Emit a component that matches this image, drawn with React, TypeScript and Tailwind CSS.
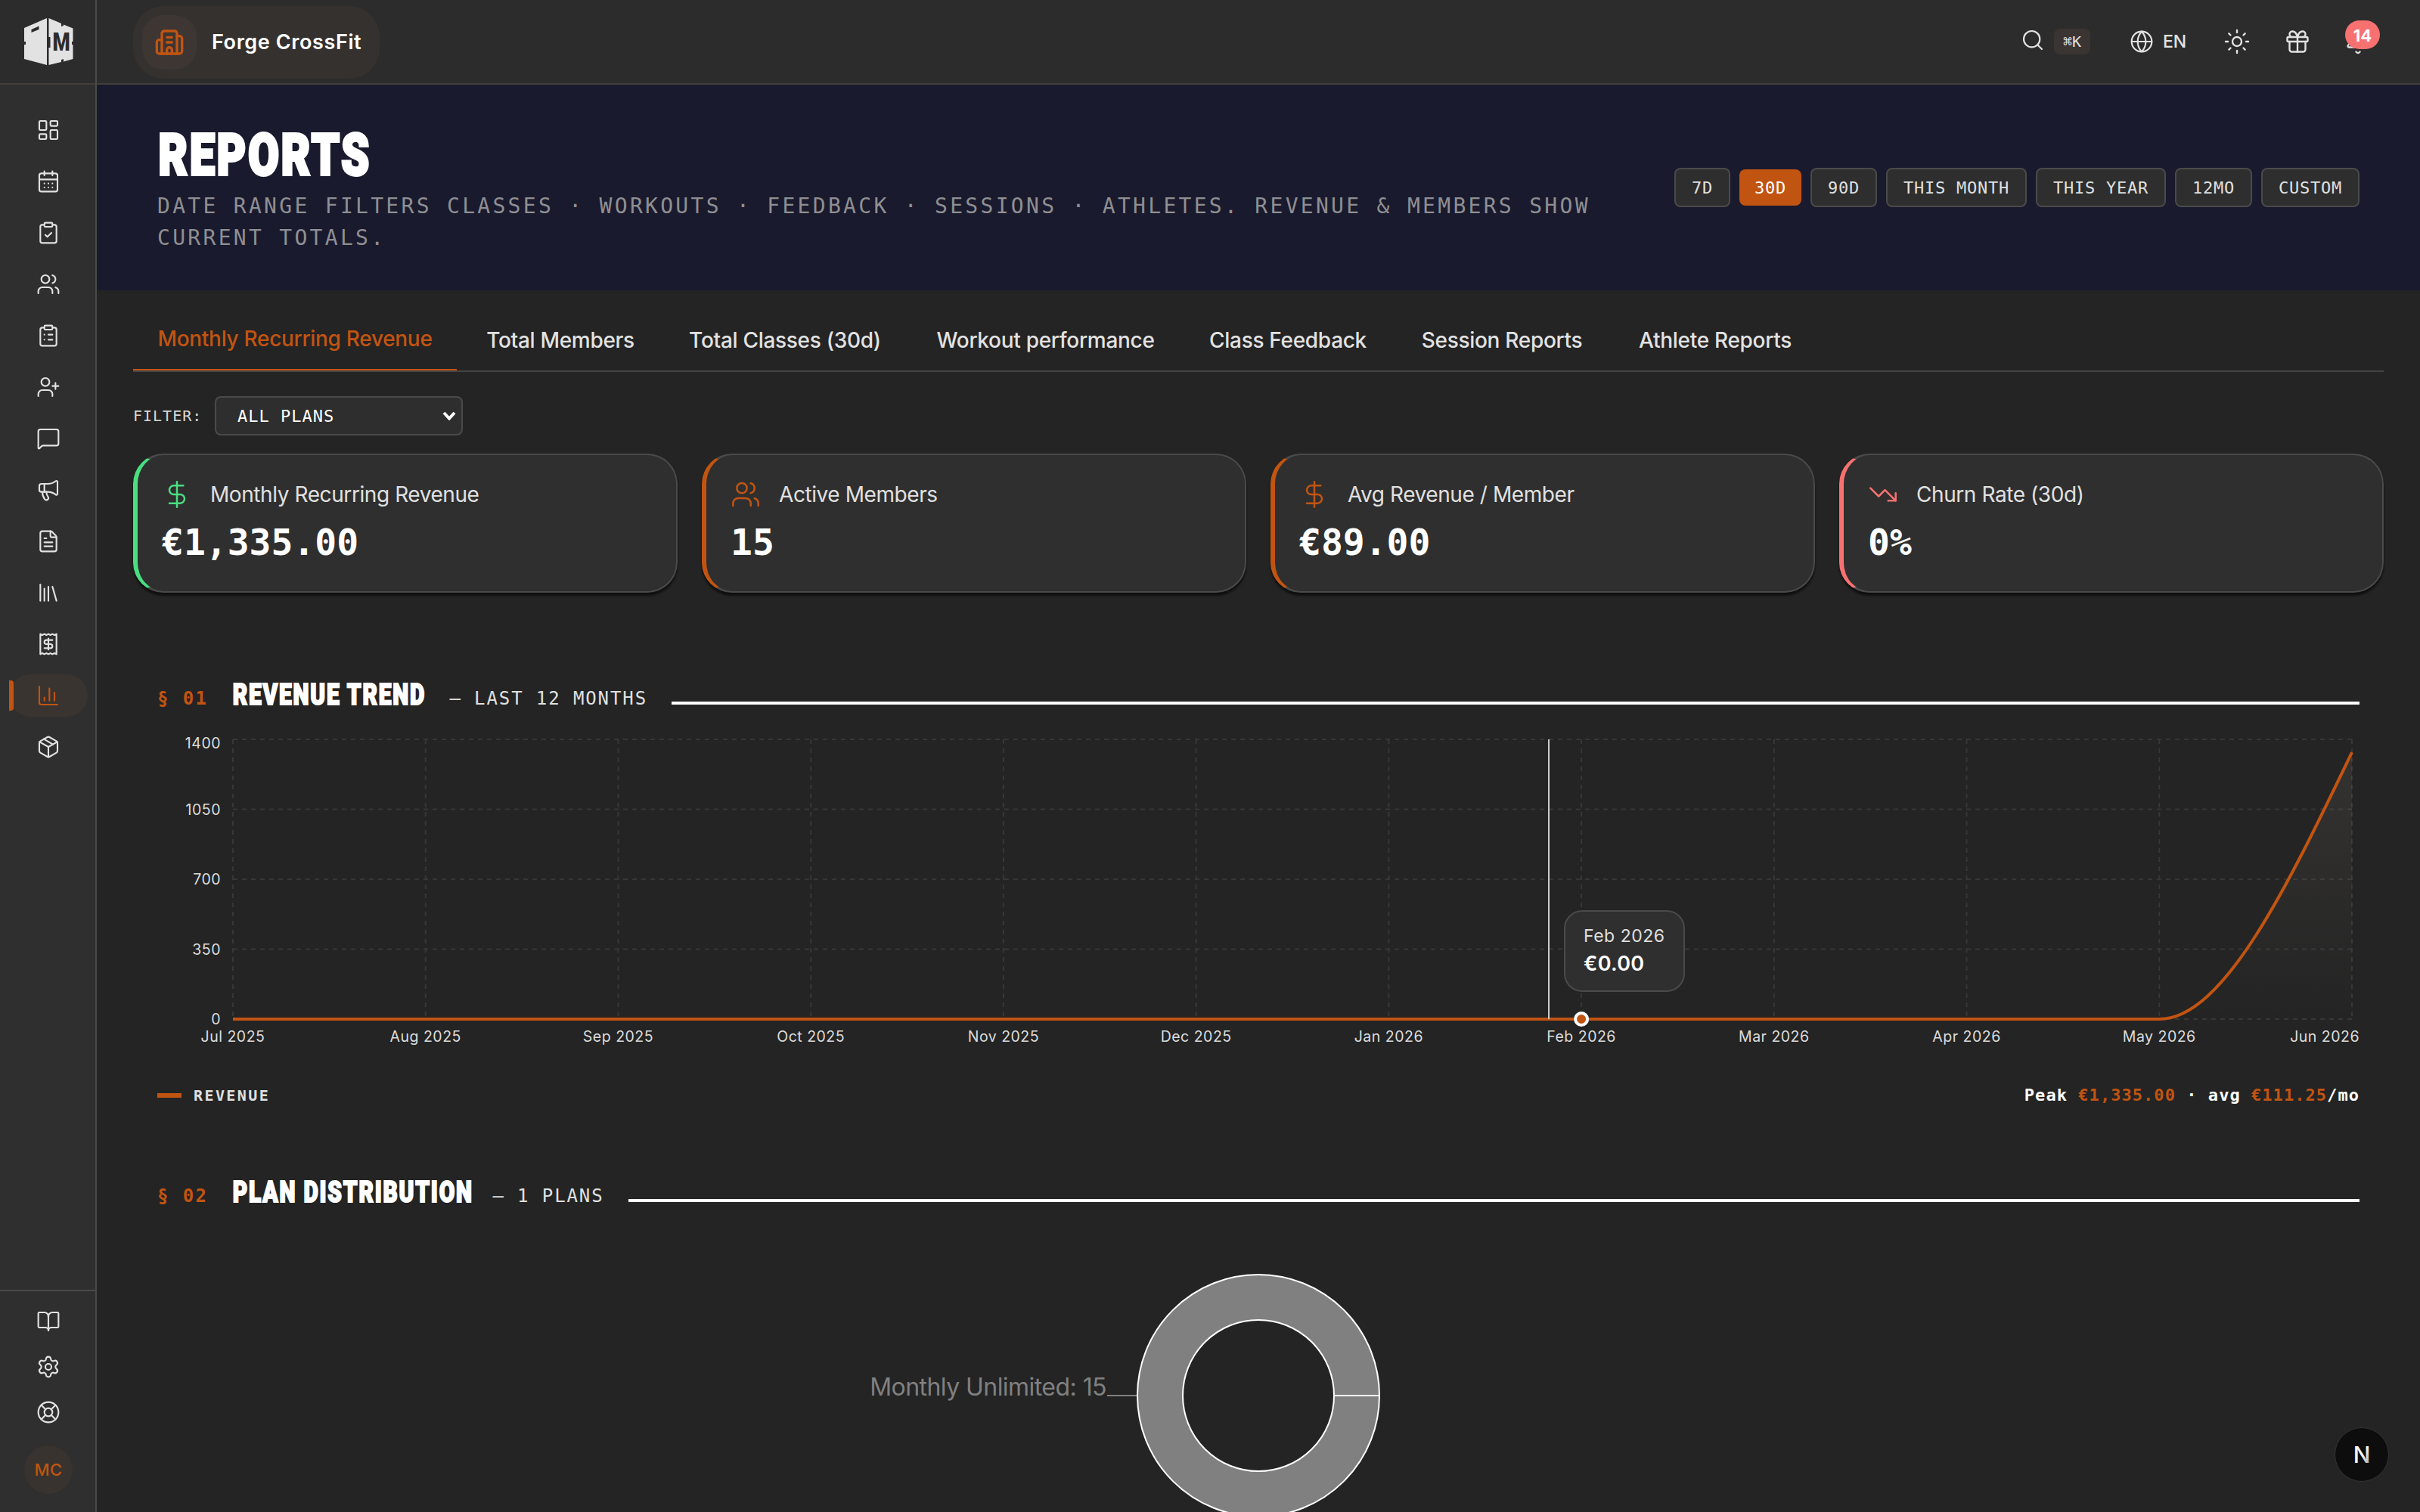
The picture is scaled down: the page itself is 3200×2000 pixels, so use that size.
import {
  Bell,
  BookOpen,
  Building2,
  CalendarDays,
  ChartColumn,
  ClipboardCheck,
  ClipboardList,
  DollarSign,
  FileText,
  Gift,
  Globe,
  LayoutDashboard,
  Library,
  LifeBuoy,
  Megaphone,
  MessageSquare,
  Package,
  Receipt,
  Search,
  Settings,
  Sun,
  TrendingDown,
  UserPlus,
  Users,
} from "lucide-react";

const navItems = [
  { icon: LayoutDashboard, label: "Dashboard" },
  { icon: CalendarDays, label: "Calendar" },
  { icon: ClipboardCheck, label: "Attendance" },
  { icon: Users, label: "Members" },
  { icon: ClipboardList, label: "Workouts" },
  { icon: UserPlus, label: "Leads" },
  { icon: MessageSquare, label: "Messages" },
  { icon: Megaphone, label: "Announcements" },
  { icon: FileText, label: "Documents" },
  { icon: Library, label: "Library" },
  { icon: Receipt, label: "Billing" },
  { icon: ChartColumn, label: "Reports", active: true },
  { icon: Package, label: "Products" },
];

const footerItems = [
  { icon: BookOpen, label: "Docs" },
  { icon: Settings, label: "Settings" },
  { icon: LifeBuoy, label: "Support" },
];

const ranges = ["7D", "30D", "90D", "THIS MONTH", "THIS YEAR", "12MO", "CUSTOM"];

const tabs = [
  { label: "Monthly Recurring Revenue", width: "w-[428px]" },
  { label: "Total Members", width: "w-[258px]" },
  { label: "Total Classes (30d)", width: "w-[320px]" },
  { label: "Workout performance", width: "w-[353px]" },
  { label: "Class Feedback", width: "w-[272px]" },
  { label: "Session Reports", width: "w-[278px]" },
  { label: "Athlete Reports", width: "w-[270px]" },
];

const stats = [
  {
    icon: DollarSign,
    label: "Monthly Recurring Revenue",
    value: "€1,335.00",
    border: "border-l-[#4ade80]",
    color: "text-[#4ade80]",
  },
  {
    icon: Users,
    label: "Active Members",
    value: "15",
    border: "border-l-[#c25412]",
    color: "text-[#c25412]",
  },
  {
    icon: DollarSign,
    label: "Avg Revenue / Member",
    value: "€89.00",
    border: "border-l-[#c25412]",
    color: "text-[#c25412]",
  },
  {
    icon: TrendingDown,
    label: "Churn Rate (30d)",
    value: "0%",
    border: "border-l-[#f87171]",
    color: "text-[#f87171]",
  },
];

const months = [
  "Jul 2025",
  "Aug 2025",
  "Sep 2025",
  "Oct 2025",
  "Nov 2025",
  "Dec 2025",
  "Jan 2026",
  "Feb 2026",
  "Mar 2026",
  "Apr 2026",
  "May 2026",
  "Jun 2026",
];

const yTicks = [
  { label: "1400", y: 978, textY: 990 },
  { label: "1050", y: 1070.5, textY: 1078 },
  { label: "700", y: 1163, textY: 1170 },
  { label: "350", y: 1255.5, textY: 1263 },
  { label: "0", y: 1348, textY: 1355 },
];

const monthX = (i: number) => 308 + (i * 2802) / 11;

const Logo = () => (
  <svg width="66" height="64" viewBox="32 22 66 64">
    <path
      fill="#e2e2e2"
      fillRule="evenodd"
      d="M33 36 63 23v62L33 77V58h2v-4h-2ZM42.500 38v4l10-4v-4.500Z"
    />
    <path
      fill="#e2e2e2"
      d="M65.500 23 82 30v4l3-1v-1.500L97.500 36.500V54h-1.500v4h1.500V77L85 80.500V77l-3 1v3L65.500 85V62h2V48h-2Z"
    />
    <text
      x="0"
      y="0"
      fill="#2c2c2c"
      fontFamily="Roboto"
      fontWeight="900"
      fontSize="34"
      transform="translate(70.500 65.500) scale(0.78 1)"
    >
      M
    </text>
  </svg>
);

const Sidebar = () => (
  <aside className="flex w-32 shrink-0 flex-col bg-[#2f2f2f] shadow-[inset_-2px_0_0_#4a4a4a]">
    <div className="mr-0.5 flex h-28 items-center justify-center border-b-2 border-[#433f3c] bg-[#2c2c2c] pl-0.5">
      <Logo />
    </div>
    <nav className="flex flex-1 flex-col gap-3 px-3 pt-8">
      {navItems.map(({ icon: Icon, label, active }) => (
        <a
          key={label}
          aria-label={label}
          className={
            active
              ? "relative flex h-14 items-center justify-center rounded-[28px] bg-[#3a3430] text-[#c25412]"
              : "flex h-14 items-center justify-center text-[#e2e2e2]"
          }
        >
          {active && (
            <span className="absolute top-2 left-0 h-10 w-1.5 rounded-r-sm bg-[#c25412]" />
          )}
          <Icon size={32} strokeWidth={1.6} />
        </a>
      ))}
    </nav>
    <div className="flex h-[294px] flex-col items-center border-t-2 border-[#4a4a4a] pt-6 text-[#e2e2e2]">
      <div className="flex flex-col gap-7">
        {footerItems.map(({ icon: Icon, label }) => (
          <a key={label} aria-label={label}>
            <Icon size={32} strokeWidth={1.6} />
          </a>
        ))}
      </div>
      <div className="mt-7 flex size-16 items-center justify-center rounded-full bg-[#38332f] text-[22px] font-medium tracking-[0.5px] text-[#c25412]">
        MC
      </div>
    </div>
  </aside>
);

const TopBar = () => (
  <header className="flex h-28 shrink-0 items-center justify-between border-b-2 border-[#433f3c] bg-[#2c2c2c] pr-16 pl-12">
    <div className="mt-0.5 flex h-24 w-[326px] items-center rounded-[40px] bg-[#34312f] pl-3">
      <div className="flex size-[72px] items-center justify-center rounded-[28px] bg-[#3d3633] text-[#c25412]">
        <Building2 size={40} strokeWidth={2} />
      </div>
      <span className="ml-5 text-[27px] font-semibold tracking-[0.6px] whitespace-nowrap text-white">
        Forge CrossFit
      </span>
    </div>
    <div className="flex items-center text-[#e2e2e2]">
      <Search size={32} strokeWidth={1.6} className="-mt-1" />
      <kbd className="mr-[52px] ml-3 flex h-[34px] w-12 items-center justify-center rounded-lg bg-[#3a3532] font-['DejaVu_Sans_Mono',monospace] text-[20px]">
        ⌘K
      </kbd>
      <Globe size={32} strokeWidth={1.6} />
      <span className="mr-12 ml-3 w-8 text-[23px] font-medium">EN</span>
      <Sun size={36} strokeWidth={1.6} />
      <Gift size={36} strokeWidth={1.6} className="ml-11" />
      <div className="relative ml-11">
        <Bell size={36} strokeWidth={1.6} />
        <span className="absolute -top-[10px] left-[1px] flex h-[38px] w-[46px] items-center justify-center rounded-full bg-[#f87171] pt-0.5 text-[22px] font-bold text-white">
          14
        </span>
      </div>
    </div>
  </header>
);

const Hero = () => (
  <section className="flex h-[272px] shrink-0 items-start justify-between bg-[#1a1a2e] px-20 pt-12">
    <div>
      <h1 className="h-[92px] origin-left scale-x-[0.775] pl-0.5 font-['Roboto',sans-serif] text-[76px] leading-[91px] font-black tracking-[3.800px] text-white [-webkit-text-stroke:4px_white]">
        REPORTS
      </h1>
      <p className="w-[1930px] font-['DejaVu_Sans_Mono',monospace] text-[28px] leading-[42px] tracking-[3.3px] text-[#8f8f92]">
        DATE RANGE FILTERS CLASSES · WORKOUTS · FEEDBACK · SESSIONS · ATHLETES.
        REVENUE &amp; MEMBERS SHOW CURRENT TOTALS.
      </p>
    </div>
    <div className="mt-[62px] flex items-center gap-3 font-['DejaVu_Sans_Mono',monospace] text-[22px] tracking-[0.75px]">
      {ranges.map((range) => (
        <button
          key={range}
          className={
            range === "30D"
              ? "h-12 rounded-lg bg-[#c25412] px-5 text-white"
              : "h-[52px] rounded-lg border-2 border-[#4a4a4a] bg-[#2e2e2e] px-[21px] text-[#e0e0e0]"
          }
        >
          {range}
        </button>
      ))}
    </div>
  </section>
);

const Tabs = () => (
  <div className="mt-6 flex h-[84px] gap-2 border-b-2 border-[#464444] text-[28px] font-medium tracking-[-0.3px]">
    {tabs.map(({ label, width }, i) => (
      <button
        key={label}
        className={`${width} whitespace-nowrap ${
          i === 0
            ? "border-b-2 border-[#c25412] text-[#c25412]"
            : "pt-0.5 text-[#e2e2e2]"
        }`}
      >
        {label}
      </button>
    ))}
  </div>
);

const Filter = () => (
  <div className="mt-8 flex h-[52px] items-center font-['DejaVu_Sans_Mono',monospace]">
    <span className="w-[108px] text-[20px] tracking-[1px] text-[#d8d8d8]">
      FILTER:
    </span>
    <div className="flex h-[52px] w-[328px] items-center justify-between rounded-lg border-2 border-[#4a4a4a] bg-[#2e2e2e] pr-[7px] pl-7 text-[22px] tracking-[1px] text-white">
      ALL PLANS
      <svg width="18" height="12" viewBox="0 0 18 12" fill="none">
        <path d="M2 2l7 7.500L16 2" stroke="white" strokeWidth="4" />
      </svg>
    </div>
  </div>
);

const StatCards = () => (
  <div className="mt-6 grid grid-cols-4 gap-8">
    {stats.map(({ icon: Icon, label, value, border, color }) => (
      <div
        key={label}
        className={`h-[184px] rounded-[40px] border-2 border-l-[6px] border-[#4a4a4a] bg-[#2f2f2f] px-8 pt-8 shadow-[0_4px_3px_rgba(0,0,0,0.6)] ${border}`}
      >
        <div className="flex h-10 items-center gap-6">
          <Icon size={40} strokeWidth={1.5} className={color} />
          <span className="text-[28px] tracking-[-0.42px] text-[#e0e0e0]">
            {label}
          </span>
        </div>
        <div className="mt-[13px] font-['DejaVu_Sans_Mono',monospace] text-[48px] leading-[60px] font-bold text-white">
          {value}
        </div>
      </div>
    ))}
  </div>
);

type SectionHeaderProps = {
  index: string;
  title: string;
  titleWidth: string;
  note: string;
};

const SectionHeader = ({ index, title, titleWidth, note }: SectionHeaderProps) => (
  <div className="flex h-[61px] items-baseline gap-8 font-['DejaVu_Sans_Mono',monospace] text-[24px] leading-none whitespace-pre">
    <span className="font-bold tracking-[2.400px] text-[#c25412]">{index}</span>
    <h2 className={`${titleWidth} font-['Roboto',sans-serif]`}>
      <span className="inline-block origin-left scale-x-[0.785] pl-px text-[38px] leading-10 font-black tracking-[2.300px] text-white [-webkit-text-stroke:2px_white]">
        {title}
      </span>
    </h2>
    <span className="tracking-[1.900px] text-[#e0e0e0]">{note}</span>
    <span className="h-1 flex-1 bg-white" />
  </div>
);

const RevenueChart = () => (
  <div className="relative">
    <svg
      width="2912"
      height="440"
      viewBox="208 960 2912 440"
      className="block overflow-visible"
    >
      <defs>
        <linearGradient id="area" x1="0" y1="0" x2="0" y2="1">
          <stop offset="0" stopColor="#8a7f78" stopOpacity="0.16" />
          <stop offset="1" stopColor="#8a7f78" stopOpacity="0" />
        </linearGradient>
      </defs>
      <g stroke="#383736" strokeWidth="2" strokeDasharray="6 6">
        {yTicks.map(({ y }) => (
          <line key={y} x1="308" x2="3110" y1={y} y2={y} />
        ))}
        {months.map((m, i) => (
          <line key={m} x1={monthX(i)} x2={monthX(i)} y1="978" y2="1348" />
        ))}
      </g>
      <path
        d="M2855.300 1348C2940.200 1348 3025.100 1171.600 3110 995.200V1348Z"
        fill="url(#area)"
      />
      <path
        d="M308 1348H2855.300C2940.200 1348 3025.100 1171.600 3110 995.200"
        fill="none"
        stroke="#c25412"
        strokeWidth="4"
      />
      <line x1="2048" x2="2048" y1="978" y2="1348" stroke="#cccccc" strokeWidth="2" />
      <circle
        cx={monthX(7)}
        cy="1348"
        r="8"
        fill="#c25412"
        stroke="#fff"
        strokeWidth="4"
      />
      <g fill="#dcdcdc" fontSize="19.5" letterSpacing="0.5">
        {yTicks.map(({ label, textY }) => (
          <text key={label} x="292" y={textY} textAnchor="end">
            {label}
          </text>
        ))}
        {months.map((m, i) => (
          <text
            key={m}
            x={i === 11 ? 3120 : monthX(i)}
            y="1378"
            textAnchor={i === 11 ? "end" : "middle"}
          >
            {m}
          </text>
        ))}
      </g>
    </svg>
    <div className="absolute top-[244px] left-[1860px] h-[108px] w-[160px] rounded-3xl border-2 border-[#4a4a4a] bg-[#2f2f2f] pt-[14px] pl-6">
      <p className="text-[23px] leading-9 tracking-[0.500px] text-[#e0e0e0]">Feb 2026</p>
      <p className="text-[27px] leading-[37px] font-semibold tracking-[0.3px] text-white">
        €0.00
      </p>
    </div>
  </div>
);

const ChartLegend = () => (
  <div className="mt-8 flex h-[34px] items-center justify-between font-['DejaVu_Sans_Mono',monospace] font-bold">
    <div className="flex items-center gap-4">
      <span className="h-1.5 w-8 bg-[#c25412]" />
      <span className="text-[20px] tracking-[2.400px] text-[#e0e0e0]">REVENUE</span>
    </div>
    <p className="-mt-px text-[22px] tracking-[1.050px] text-white">
      Peak <span className="text-[#c25412]">€1,335.00</span> · avg{" "}
      <span className="text-[#c25412]">€111.25</span>/mo
    </p>
  </div>
);

const PlanChart = () => (
  <svg width="2912" height="382" viewBox="208 1618 2912 382" className="block">
    <circle cx="1664" cy="1846" r="130" fill="none" stroke="#808080" strokeWidth="60" />
    <g stroke="#fff" strokeWidth="2" fill="none">
      <circle cx="1664" cy="1846" r="160" />
      <circle cx="1664" cy="1846" r="100" />
      <path d="M1764 1846h60" />
    </g>
    <path d="M1464 1846h39" stroke="#808080" strokeWidth="2" />
    <text
      x="1463"
      y="1846"
      textAnchor="end"
      fill="#808080"
      fontSize="32"
      letterSpacing="-0.55"
    >
      Monthly Unlimited: 15
    </text>
  </svg>
);

const DevBadge = () => (
  <div className="absolute right-[41px] bottom-10 flex size-[72px] items-center justify-center rounded-full border border-[#333333] bg-[#0d0d0d]">
    <svg width="56" height="56" viewBox="0 0 56 56">
      <defs>
        <linearGradient id="mark" x1="0" y1="0" x2="1" y2="1">
          <stop offset="0.5" stopColor="#ffffff" />
          <stop offset="1" stopColor="#9a9a9a" />
        </linearGradient>
      </defs>
      <text
        x="28"
        y="38.500"
        textAnchor="middle"
        fill="url(#mark)"
        fontSize="30"
        fontWeight="500"
      >
        N
      </text>
    </svg>
  </div>
);

export default function App() {
  return (
    <div className="relative flex h-[2000px] w-[3200px] overflow-hidden bg-[#242424] font-['Inter',sans-serif]">
      <Sidebar />
      <main className="flex min-w-0 flex-1 flex-col">
        <TopBar />
        <Hero />
        <div className="px-12">
          <Tabs />
          <Filter />
          <StatCards />
          <div className="px-8 pt-[115px]">
            <SectionHeader
              index="§ 01"
              title="REVENUE TREND"
              titleWidth="w-[255px]"
              note="— LAST 12 MONTHS"
            />
            <RevenueChart />
            <ChartLegend />
            <div className="mt-[91px]">
              <SectionHeader
                index="§ 02"
                title="PLAN DISTRIBUTION"
                titleWidth="w-[312px]"
                note="— 1 PLANS"
              />
              <PlanChart />
            </div>
          </div>
        </div>
      </main>
      <DevBadge />
    </div>
  );
}
